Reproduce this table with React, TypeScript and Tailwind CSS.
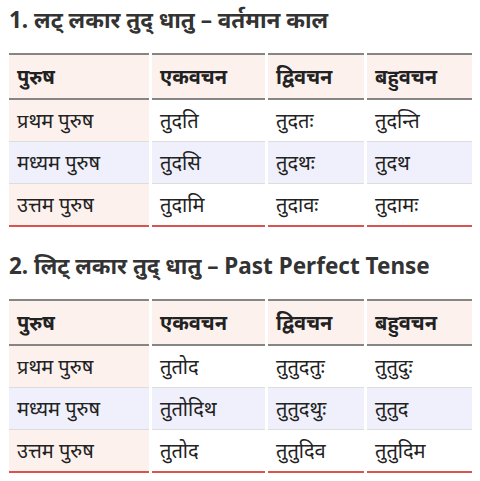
const font = { fontFamily: '"Noto Sans", "Noto Sans Devanagari", "Lohit Devanagari", sans-serif' };

type Row = [string, string, string, string];

const head: Row = ["पुरुष", "एकवचन", "द्विवचन", "बहुवचन"];

const lat: Row[] = [
  ["प्रथम पुरुष", "तुदति", "तुदतः", "तुदन्ति"],
  ["मध्यम पुरुष", "तुदसि", "तुदथः", "तुदथ"],
  ["उत्तम पुरुष", "तुदामि", "तुदावः", "तुदामः"],
];

const lit: Row[] = [
  ["प्रथम पुरुष", "तुतोद", "तुतुदतुः", "तुतुदुः"],
  ["मध्यम पुरुष", "तुतोदिथ", "तुतुदथुः", "तुतुद"],
  ["उत्तम पुरुष", "तुतोद", "तुतुदिव", "तुतुदिम"],
];

const widths = ["w-[140px]", "w-[113px]", "w-[96px]", "w-[105px]"];

function Table({ rows }: { rows: Row[] }) {
  return (
    <table className="w-[465px] -ml-[3px] border-separate border-spacing-x-[3px] border-spacing-y-0 table-fixed">
      <thead>
        <tr>
          {head.map((h, i) => (
            <th
              key={h}
              className={`${widths[i]} h-[47px] bg-[#fdf1ee] border-t-2 border-b-2 border-[#858585] px-[8px] text-left text-[20px] leading-[26px] font-bold text-[#222]`}
            >
              {h}
            </th>
          ))}
        </tr>
      </thead>
      <tbody>
        {rows.map((r, ri) => {
          const last = ri === rows.length - 1;
          const mid = ri === 1;
          return (
            <tr key={ri}>
              {r.map((c, ci) => (
                <td
                  key={ci}
                  className={`px-[8px] text-[20px] leading-[26px] text-[#222] ${
                    last ? "h-[43px] border-b-2 border-[#d9534f]" : "h-[42px] border-b border-[#dddddd]"
                  } ${mid ? "bg-[#eff0fb]" : ci === 0 ? "bg-[#fdf1ee]" : "bg-white"}`}
                >
                  {c}
                </td>
              ))}
            </tr>
          );
        })}
      </tbody>
    </table>
  );
}

export default function App() {
  return (
    <div className="w-[480px] h-[481px] bg-white px-[9px] overflow-hidden" style={font}>
      <h2 className="h-[53px] pt-[2px] text-[22.5px] leading-[36px] font-bold text-[#333]">
        1. लट् लकार तुद् धातु – वर्तमान काल
      </h2>
      <Table rows={lat} />
      <h2 className="h-[53px] mt-[19px] pt-[2px] text-[22.5px] leading-[36px] font-bold text-[#333]">
        2. लिट् लकार तुद् धातु – Past Perfect Tense
      </h2>
      <Table rows={lit} />
    </div>
  );
}
